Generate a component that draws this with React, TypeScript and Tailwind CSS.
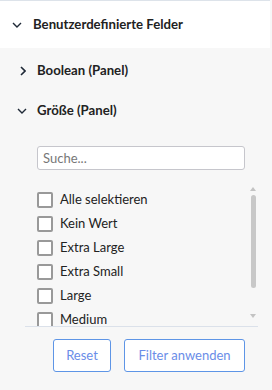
import React from 'react';

const options = ['Alle selektieren', 'Kein Wert', 'Extra Large', 'Extra Small', 'Large', 'Medium'];

function ChevronDown() {
  return (
    <svg width="10" height="6" viewBox="0 0 10 6" fill="none" stroke="#1f2937" strokeWidth="1.4">
      <path d="M1 1l4 4 4-4" />
    </svg>
  );
}

function ChevronRight() {
  return (
    <svg width="6" height="10" viewBox="0 0 6 10" fill="none" stroke="#1f2937" strokeWidth="1.6">
      <path d="M1 1l4 4-4 4" />
    </svg>
  );
}

export default function App() {
  return (
    <div className="w-[272px] h-[390px] bg-[#f7f7f7] overflow-hidden text-[13px] text-[#222]" style={{ fontFamily: 'Lato, "Open Sans", sans-serif' }}>
      <div className="border-t border-[#dde3ea] bg-white mr-[2px] h-[48px] flex items-center pl-[12px]">
        <ChevronDown />
        <span className="ml-[11px] font-bold text-[13.2px]">Benutzerdefinierte Felder</span>
      </div>

      <div className="h-[44px] flex items-center pl-[20px] pt-[1px]">
        <ChevronRight />
        <span className="ml-[11px] font-bold text-[13.2px]">Boolean (Panel)</span>
      </div>

      <div className="h-[38px] flex items-center pl-[17px]">
        <ChevronDown />
        <span className="ml-[10px] font-bold text-[13.2px]">Größe (Panel)</span>
      </div>

      <div className="pt-[16px] pl-[37px] pr-[27px]">
        <input
          className="w-full h-[24px] bg-white border border-[#c6c6cc] rounded-[3px] px-[5px] text-[13px] outline-none placeholder:text-[#777]"
          placeholder="Suche..."
        />
      </div>

      <div className="mt-[16px] ml-[25px] mr-[14px] border-b border-[#dbe1ea] h-[141px] relative overflow-hidden">
        <div className="pl-[12px] pt-[2px] flex flex-col">
          {options.map((o) => (
            <label key={o} className="h-[24px] shrink-0 flex items-center gap-[7px]">
              <span className="w-[16px] h-[16px] border-2 border-[#999] rounded-[2px] bg-white shrink-0" />
              <span className="text-[#222]">{o}</span>
            </label>
          ))}
        </div>
        <div className="absolute right-[2px] top-0 bottom-0 w-[6px] flex flex-col items-center">
          <div className="mt-[1px] w-0 h-0 border-l-[3px] border-r-[3px] border-b-[4px] border-l-transparent border-r-transparent border-b-[#c3c3c3]" />
          <div className="mt-[4px] w-[5px] h-[93px] rounded-full bg-[#c8c8c8]" />
          <div className="mt-auto mb-[8px] w-0 h-0 border-l-[3px] border-r-[3px] border-t-[4px] border-l-transparent border-r-transparent border-t-[#c3c3c3]" />
        </div>
      </div>

      <div className="flex justify-end gap-[13px] pr-[27px] pt-[12px]">
        <button className="h-[33px] w-[58px] border border-[#5e95e6] rounded-[3px] bg-white text-[#6a8de8]">Reset</button>
        <button className="h-[33px] w-[121px] border border-[#5e95e6] rounded-[3px] bg-white text-[#6a8de8]">Filter anwenden</button>
      </div>
    </div>
  );
}
